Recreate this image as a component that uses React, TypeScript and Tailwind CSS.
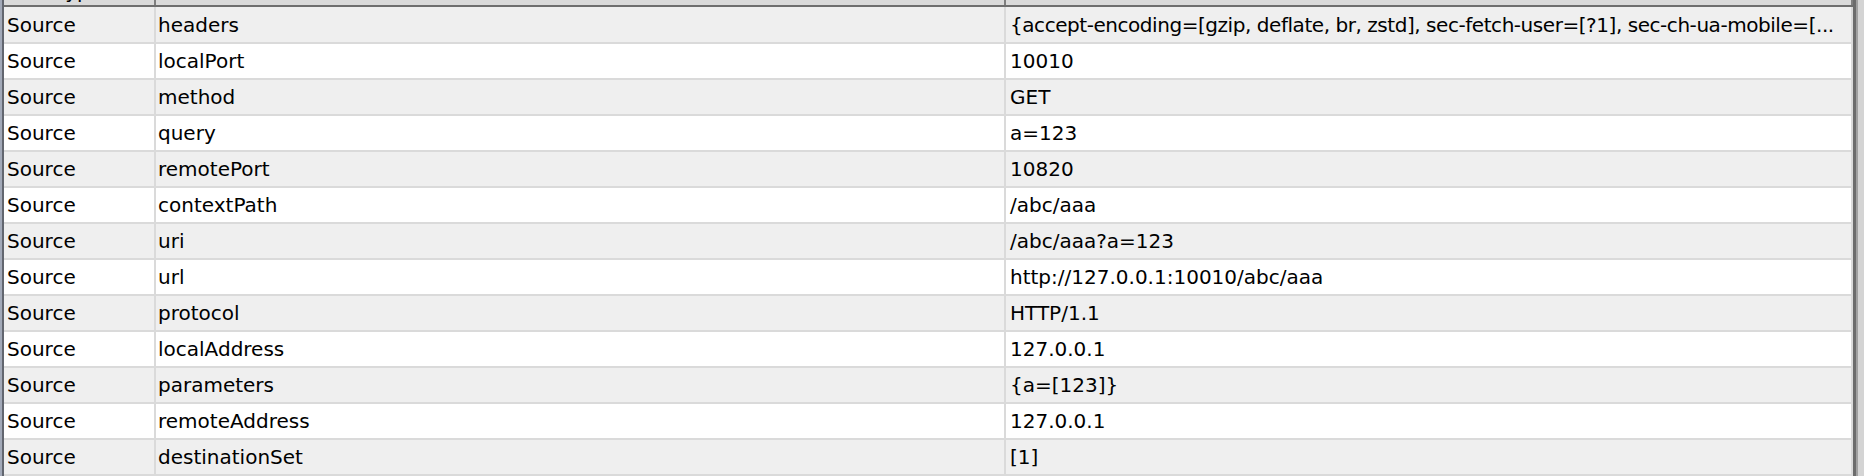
const rows: [string, string, string][] = [
  ["Source", "headers", "{accept-encoding=[gzip, deflate, br, zstd], sec-fetch-user=[?1], sec-ch-ua-mobile=[..."],
  ["Source", "localPort", "10010"],
  ["Source", "method", "GET"],
  ["Source", "query", "a=123"],
  ["Source", "remotePort", "10820"],
  ["Source", "contextPath", "/abc/aaa"],
  ["Source", "uri", "/abc/aaa?a=123"],
  ["Source", "url", "http://127.0.0.1:10010/abc/aaa"],
  ["Source", "protocol", "HTTP/1.1"],
  ["Source", "localAddress", "127.0.0.1"],
  ["Source", "parameters", "{a=[123]}"],
  ["Source", "remoteAddress", "127.0.0.1"],
  ["Source", "destinationSet", "[1]"],
];

const cols = "grid grid-cols-[152px_850px_1fr]";

function HeaderCell({ label }: { label: string }) {
  return (
    <div className="h-[5px] overflow-hidden border-r-2 border-[#7f7f7f] bg-[#dadada] flex justify-center">
      <span className="-mt-[19px] leading-[21px] text-[20px] text-black whitespace-nowrap">{label}</span>
    </div>
  );
}

export default function App() {
  return (
    <div
      className="w-[1864px] h-[476px] overflow-hidden flex bg-[#d4d4d4] text-black"
      style={{ fontFamily: '"DejaVu Sans", Tahoma, sans-serif' }}
    >
      <div className="w-[2px] bg-[#a2a9b8]" />
      <div className="w-[2px] bg-[#62666f]" />
      <div className="w-[1849px] flex flex-col bg-white">
        <div className={`${cols} border-b-2 border-[#6e6e6e]`}>
          <HeaderCell label="Type" />
          <HeaderCell label="Name" />
          <HeaderCell label="Value" />
        </div>
        {rows.map(([type, name, value], i) => (
          <div
            key={name}
            className={`${cols} ${i === 0 ? "h-[37px]" : "h-[36px]"} shrink-0 border-b-2 border-[#dadada] ${
              i % 2 === 0 ? "bg-[#efefef]" : "bg-white"
            } text-[20px]`}
          >
            <div className="flex items-center pl-[3px] border-r-2 border-[#dadada] overflow-hidden whitespace-nowrap">
              {type}
            </div>
            <div className="flex items-center pl-[2px] border-r-2 border-[#dadada] overflow-hidden whitespace-nowrap">
              {name}
            </div>
            <div
              className={`flex items-center pl-[4px] border-r-2 border-[#dadada] overflow-hidden whitespace-nowrap ${
                i === 0 ? "tracking-[-0.45px]" : ""
              }`}
            >
              {value}
            </div>
          </div>
        ))}
      </div>
      <div className="w-[3px] bg-[#6c6c6c]" />
      <div className="w-[2px] bg-[#a0a0a0]" />
      <div className="flex-1 bg-[#d4d4d4]" />
    </div>
  );
}
